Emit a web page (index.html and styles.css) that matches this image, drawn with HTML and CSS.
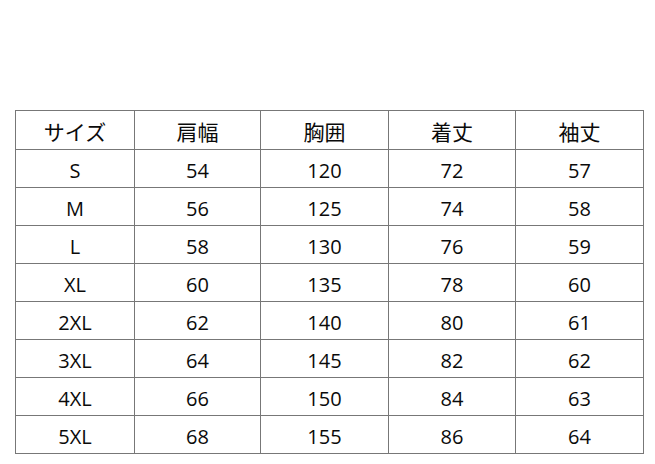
FILE: index.html
```html
<!DOCTYPE html>
<html lang="ja">
<head>
<meta charset="utf-8">
<link rel="stylesheet" href="styles.css">
</head>
<body>
<table class="size-table">
  <colgroup>
    <col class="c1"><col class="c2"><col class="c3"><col class="c4"><col class="c5">
  </colgroup>
  <thead>
    <tr><th>サイズ</th><th>肩幅</th><th>胸囲</th><th>着丈</th><th>袖丈</th></tr>
  </thead>
  <tbody>
    <tr><td>S</td><td>54</td><td>120</td><td>72</td><td>57</td></tr>
    <tr><td>M</td><td>56</td><td>125</td><td>74</td><td>58</td></tr>
    <tr><td>L</td><td>58</td><td>130</td><td>76</td><td>59</td></tr>
    <tr><td>XL</td><td>60</td><td>135</td><td>78</td><td>60</td></tr>
    <tr><td>2XL</td><td>62</td><td>140</td><td>80</td><td>61</td></tr>
    <tr><td>3XL</td><td>64</td><td>145</td><td>82</td><td>62</td></tr>
    <tr><td>4XL</td><td>66</td><td>150</td><td>84</td><td>63</td></tr>
    <tr><td>5XL</td><td>68</td><td>155</td><td>86</td><td>64</td></tr>
  </tbody>
</table>
</body>
</html>
```
FILE: styles.css
```css
html, body {
  margin: 0;
  padding: 0;
  background: #ffffff;
}
body {
  padding: 110px 0 0 15px;
  font-family: "Open Sans", "Noto Sans CJK JP", sans-serif;
  color: #0a0a0a;
}
.size-table {
  border-collapse: collapse;
  table-layout: fixed;
  width: 628px;
}
.c1 { width: 119px; }
.c2 { width: 126px; }
.c3 { width: 128px; }
.c4 { width: 127px; }
.c5 { width: 128px; }
.size-table th,
.size-table td {
  border: 1px solid #777777;
  text-align: center;
  vertical-align: middle;
  padding: 4px 0 0 0;
  font-size: 20px;
  font-weight: 500;
  line-height: 24px;
}
.size-table th {
  font-family: "Noto Sans CJK JP", sans-serif;
  font-size: 21px;
  font-weight: 400;
  padding: 2px 0 0 0;
  height: 36px;
}
.size-table td {
  height: 33px;
}
```
